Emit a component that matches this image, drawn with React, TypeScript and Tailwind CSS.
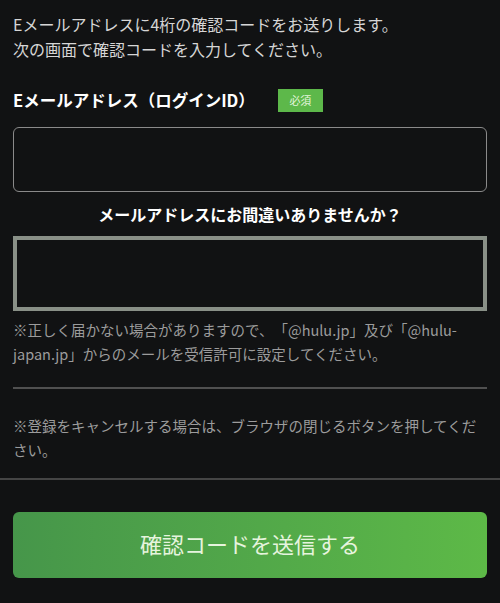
export default function App() {
  return (
    <div
      className="min-h-[603px] w-[500px] bg-[#111213] px-[13px] pt-[12px] text-white [text-spacing-trim:space-all]"
      style={{ fontFamily: '"Noto Sans CJK JP", "Noto Sans", sans-serif' }}
    >
      <p className="text-[16px] leading-[25px] text-[#d6d6d6]">
        Eメールアドレスに4桁の確認コードをお送りします。
        <br />
        次の画面で確認コードを入力してください。
      </p>

      <div className="mt-[27px] flex items-center gap-[23px]">
        <span className="text-[16.5px] font-bold leading-[23px] text-white">Eメールアドレス（ログインID）</span>
        <span className="flex h-[23px] w-[45px] items-center justify-center bg-[#5db84a] text-[11px] text-[#e2f5da]">
          必須
        </span>
      </div>

      <div className="mt-[15px] h-[65px] rounded-[6px] border-[1.5px] border-[#8a8a8a] bg-[#111213]" />

      <p className="mt-[10px] text-center text-[16px] font-bold leading-[24px] text-white">
        メールアドレスにお間違いありませんか？
      </p>

      <div className="mt-[10px] h-[75px] border-4 border-[#899087] bg-[#111213]" />

      <p className="mt-[7px] text-[14.5px] leading-[24px] text-[#9c9c9c]">
        ※正しく届かない場合がありますので、「@hulu.jp」及び「@hulu-japan.jp」からのメールを受信許可に設定してください。
      </p>

      <div className="mt-[21px] h-[2px] bg-[#505050]" />

      <p className="mt-[25px] text-[14.5px] leading-[24px] text-[#9c9c9c]">
        ※登録をキャンセルする場合は、ブラウザの閉じるボタンを押してください。
      </p>

      <div className="-mx-[13px] mt-[16px] h-[2px] bg-[#454545]" />

      <button className="mt-[32px] flex h-[66px] w-full items-center justify-center rounded-[6px] bg-gradient-to-r from-[#46964a] to-[#5db947] pb-[4px] text-[22px] text-[#e6f4de]">
        確認コードを送信する
      </button>
    </div>
  );
}
